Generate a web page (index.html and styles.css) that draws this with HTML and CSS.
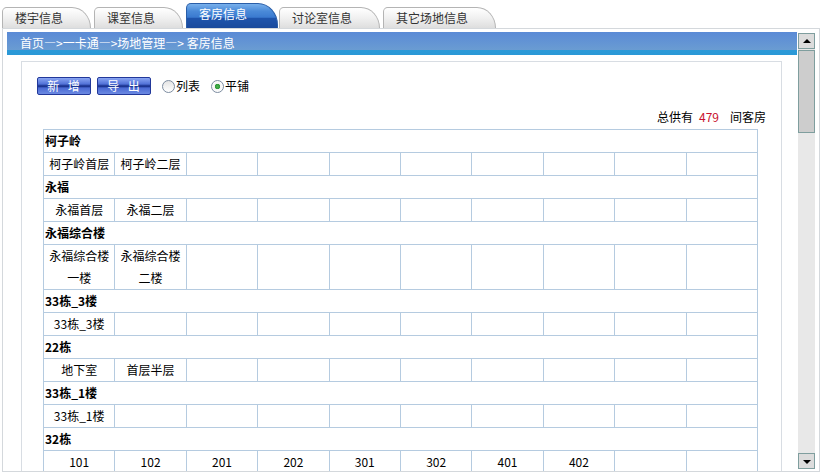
FILE: index.html
```html
<!DOCTYPE html>
<html lang="zh-CN">
<head>
<meta charset="utf-8">
<title>客房信息</title>
<link rel="stylesheet" href="styles.css">
</head>
<body>
<div class="tabs">
  <div class="tab">楼宇信息</div>
  <div class="tab">课室信息</div>
  <div class="tab active">客房信息</div>
  <div class="tab">讨论室信息</div>
  <div class="tab">其它场地信息</div>
</div>
<div class="frame">
  <div class="main">
    <div class="crumb">首页—&gt;一卡通—&gt;场地管理—&gt; 客房信息</div>
    <div class="panel">
      <div class="toolbar">
        <button class="btn">新 增</button>
        <button class="btn">导 出</button>
        <label class="radio"><span class="circle"></span>列表</label>
        <label class="radio"><span class="circle on"></span>平铺</label>
      </div>
      <div class="total">总供有<span class="num">479</span>间客房</div>
      <table class="grid">
        <colgroup><col><col><col><col><col><col><col><col><col><col></colgroup>
        <tr class="head"><td colspan="10">柯子岭</td></tr>
        <tr><td>柯子岭首层</td><td>柯子岭二层</td><td></td><td></td><td></td><td></td><td></td><td></td><td></td><td></td></tr>
        <tr class="head"><td colspan="10">永福</td></tr>
        <tr><td>永福首层</td><td>永福二层</td><td></td><td></td><td></td><td></td><td></td><td></td><td></td><td></td></tr>
        <tr class="head"><td colspan="10">永福综合楼</td></tr>
        <tr><td>永福综合楼一楼</td><td>永福综合楼二楼</td><td></td><td></td><td></td><td></td><td></td><td></td><td></td><td></td></tr>
        <tr class="head"><td colspan="10">33栋_3楼</td></tr>
        <tr><td>33栋_3楼</td><td></td><td></td><td></td><td></td><td></td><td></td><td></td><td></td><td></td></tr>
        <tr class="head"><td colspan="10">22栋</td></tr>
        <tr><td>地下室</td><td>首层半层</td><td></td><td></td><td></td><td></td><td></td><td></td><td></td><td></td></tr>
        <tr class="head"><td colspan="10">33栋_1楼</td></tr>
        <tr><td>33栋_1楼</td><td></td><td></td><td></td><td></td><td></td><td></td><td></td><td></td><td></td></tr>
        <tr class="head"><td colspan="10">32栋</td></tr>
        <tr><td>101</td><td>102</td><td>201</td><td>202</td><td>301</td><td>302</td><td>401</td><td>402</td><td></td><td></td></tr>
      </table>
    </div>
  </div>
  <div class="scroll">
    <div class="sbtn up"></div>
    <div class="track"><div class="thumb"></div></div>
    <div class="sbtn down"></div>
  </div>
</div>
</body>
</html>
```

FILE: styles.css
```css
* { box-sizing: border-box; }
html, body { margin: 0; padding: 0; background: #fff; }
body {
  font-family: "Noto Sans CJK SC", "Noto Sans", sans-serif;
  font-size: 12px;
  color: #000;
  width: 826px;
  height: 475px;
  overflow: hidden;
}

/* tabs */
.tabs {
  display: flex;
  align-items: flex-end;
  height: 28px;
  padding-left: 2px;
}
.tab {
  height: 21px;
  padding: 2px 27px 0 12px;
  margin-right: 3px;
  line-height: 16px;
  color: #333;
  background: linear-gradient(#ffffff, #f2f2f2 45%, #dedede);
  border: 1px solid #b4b4b4;
  border-bottom: none;
  border-radius: 5px 20px 0 0 / 5px 22px 0 0;
  white-space: nowrap;
}
.tab.active {
  height: 25px;
  padding-top: 1px;
  padding-right: 30px;
  line-height: 18px;
  color: #fff;
  margin-right: 1px;
  background: linear-gradient(#78b0ec, #4a8ad8 30%, #3a7ad0 55%, #1e54ac 60%, #1a4a9c);
  border-color: #2a5ea8;
}

/* frame */
.frame {
  display: flex;
  height: 444px;
  margin: 0 6px 0 2px;
  border: 1px solid #d4d8dc;
  padding: 3px 4px 0 4px;
  overflow: hidden;
}
.main {
  width: 790px;
  overflow: hidden;
}
.crumb {
  height: 23px;
  padding-left: 13px;
  line-height: 22px;
  color: #fff;
  background: linear-gradient(#5a8ad6, #6a9cd2 18px, #2c9ad8 18px, #2a98d6 23px);
  white-space: nowrap;
}
.panel {
  margin: 6px 15px 0 14px;
  border: 1px solid #d8dde3;
  border-bottom: none;
  padding: 15px 15px 0 15px;
}
.toolbar {
  display: flex;
  align-items: center;
  height: 18px;
}
.btn {
  width: 54px;
  height: 18px;
  margin: 0 6px 0 0;
  padding: 0 0 0 2px;
  border: 1px solid #22389a;
  border-radius: 2px;
  font: inherit;
  line-height: 16px;
  letter-spacing: 3px;
  color: #fff;
  background: linear-gradient(#8aa6f2, #5272d8 38%, #26409e 46%, #1c3490 54%, #4a6ad4 62%, #6c8ae2);
}
.radio {
  display: flex;
  align-items: center;
  margin-left: 5px;
  margin-right: 6px;
  line-height: 18px;
}
.circle {
  width: 13px;
  height: 13px;
  margin-right: 1px;
  border: 1px solid #7c8ca0;
  border-radius: 50%;
  background: linear-gradient(#e4e4e4, #ffffff);
}
.circle.on {
  background: radial-gradient(circle, #4fb24f 0, #2e9a3a 2.4px, #f4f4f4 3px, #ffffff 6px);
}
.total {
  margin-top: 12px;
  height: 20px;
  line-height: 20px;
  text-align: right;
}
.num {
  color: #c8102e;
  margin: 0 11px 0 6px;
}
.grid {
  width: 715px;
  margin: 2px 0 0 6px;
  border-collapse: collapse;
  table-layout: fixed;
}
.grid td {
  border: 1px solid #b5cbe0;
  padding: 0;
  line-height: 22px;
  text-align: center;
  vertical-align: middle;
}
.grid tr.head td {
  text-align: left;
  font-weight: bold;
  padding-left: 1px;
}

/* fake scrollbar */
.scroll {
  width: 17px;
  margin: 1px 0 2px 1px;
  display: flex;
  flex-direction: column;
  background: #e8e8e8;
}
.sbtn {
  height: 16px;
  border: 1px solid #7f9e9e;
  background: #dcdcdc;
  position: relative;
}
.sbtn::after {
  content: "";
  position: absolute;
  left: 4px;
  width: 0;
  height: 0;
  border-left: 4px solid transparent;
  border-right: 4px solid transparent;
}
.sbtn.up::after { top: 5px; border-bottom: 4px solid #000; }
.sbtn.down::after { top: 6px; border-top: 4px solid #000; }
.track {
  flex: 1;
  padding-top: 1px;
}
.thumb {
  height: 83px;
  border: 1px solid #7f9e9e;
  background: #cdcdcd;
}
```
